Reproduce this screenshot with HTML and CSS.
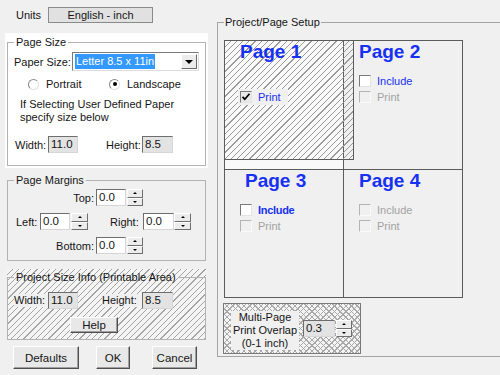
FILE: index.html
```html
<!DOCTYPE html>
<html>
	<head>
		<meta charset="UTF-8">
		<title>Page Setup</title>
		<link rel="stylesheet" href="styles.css">
	</head>
	<body>
		<div class="dialog">
			<div class="side">
				<div class="units"><span>Units</span><div class="unit_btn">English - inch</div></div>
				<div class="paper">
					<fieldset class="grp">
						<legend>Page Size</legend>
						<div class="row row_paper">
							<span class="l_paper">Paper Size:</span>
							<div class="select"><span class="sel_text">Letter 8.5 x 11in</span><span class="drop"></span></div>
						</div>
						<div class="row row_radio">
							<div class="opt opt_first"><span class="radio"></span>Portrait</div>
							<div class="opt"><span class="radio on"></span>Landscape</div>
						</div>
						<p class="note">If Selecting User Defined Paper<br>specify size below</p>
						<div class="row row_wh">
							<span class="l_w">Width:</span><div class="field ro w30">11.0</div>
							<span class="l_h">Height:</span><div class="field ro w31">8.5</div>
						</div>
					</fieldset>
				</div>
				<fieldset class="grp grp_margin">
					<legend>Page Margins</legend>
					<div class="row row_top">
						<span class="l_right">Top:</span><div class="field w30">0.0</div>
						<div class="spin"><span class="up"></span><span class="dn"></span></div>
					</div>
					<div class="row row_lr">
						<span class="l_left">Left:</span><div class="field w30">0.0</div>
						<div class="spin spin_w"><span class="up"></span><span class="dn"></span></div>
						<span class="l_rgt">Right:</span><div class="field w31">0.0</div>
						<div class="spin spin_w spin_tight"><span class="up"></span><span class="dn"></span></div>
					</div>
					<div class="row row_bottom">
						<span class="l_right">Bottom:</span><div class="field w30">0.0</div>
						<div class="spin"><span class="up"></span><span class="dn"></span></div>
					</div>
				</fieldset>
				<div class="proj">
					<fieldset class="grp grp_proj">
						<legend>Project Size Info (Printable Area)</legend>
						<div class="row row_pwh">
							<span class="l_pw">Width:</span><div class="field ro w30">11.0</div>
							<span class="l_ph">Height:</span><div class="field ro w31">8.5</div>
						</div>
						<div class="btn help_btn">Help</div>
					</fieldset>
				</div>
				<div class="actions">
					<div class="btn b_defaults">Defaults</div>
					<div class="btn b_ok">OK</div>
					<div class="btn b_cancel">Cancel</div>
				</div>
			</div>
			<div class="main">
				<fieldset class="grp setup">
					<legend>Project/Page Setup</legend>
					<div class="pages">
						<div class="printable"></div> <!-- printable area over page 1 -->
						<div class="page page_1">
							<div class="page_title">Page 1</div>
							<div class="checks">
								<div class="chk_row hidden"><span class="chk"></span><span class="chk_l">Include</span></div>
								<div class="chk_row pill"><span class="chk grey"><svg width="10" height="10" viewBox="0 0 10 10"><path d="M1.5 4.8l2.3 2.4 4.7-5.4" fill="none" stroke="#000" stroke-width="1.7"/></svg></span><span class="chk_l">Print</span></div>
							</div>
						</div>
						<div class="page">
							<div class="page_title">Page 2</div>
							<div class="checks">
								<div class="chk_row"><span class="chk"></span><span class="chk_l">Include</span></div>
								<div class="chk_row off"><span class="chk"></span><span class="chk_l">Print</span></div>
							</div>
						</div>
						<div class="page">
							<div class="page_title title_3">Page 3</div>
							<div class="checks">
								<div class="chk_row"><span class="chk"></span><span class="chk_l strong">Include</span></div>
								<div class="chk_row off"><span class="chk"></span><span class="chk_l">Print</span></div>
							</div>
						</div>
						<div class="page">
							<div class="page_title">Page 4</div>
							<div class="checks">
								<div class="chk_row off"><span class="chk"></span><span class="chk_l">Include</span></div>
								<div class="chk_row off"><span class="chk"></span><span class="chk_l">Print</span></div>
							</div>
						</div>
					</div>
					<div class="overlap">
						<div class="overlap_l">Multi-Page<br>Print Overlap<br>(0-1 inch)</div>
						<div class="field ro w32">0.3</div>
						<div class="spin"><span class="up"></span><span class="dn"></span></div>
					</div>
				</fieldset>
			</div>
		</div>
	</body>
</html>
```

FILE: styles.css
```css
*{
	margin: 0;
	padding: 0;
	box-sizing: border-box;
}
body{
	background-color: #f0f0f0;
	font-family: "Liberation Sans", Arial, sans-serif;
	font-size: 11px;
	color: #151515;
}
.dialog{
	display: flex;
	width: 500px;
	height: 375px;
	overflow: hidden;
}
.side{
	width: 217px;
	flex: none;
}
.main{
	width: 320px;
	flex: none;
}
.row{
	display: flex;
	align-items: center;
}

/* group boxes */
fieldset.grp{
	border: 1px solid #b2b2b2;
	padding: 0 6px;
	min-width: 0;
}
legend{
	padding: 0 2px;
	line-height: 12px;
}

/* units */
.units{
	display: flex;
	height: 33px;
	padding: 7px 0 0 16px;
}
.units span{
	width: 32px;
	line-height: 16px;
}
.unit_btn{
	width: 105px;
	height: 16px;
	line-height: 14px;
	text-align: center;
	background-color: #e1e1e1;
	border: 1px solid #8a8a8a;
}

/* page size */
.paper{
	margin-left: 5px;
	width: 203px;
	height: 135px;
	padding: 3px 2px 0;
	background-color: #fff;
}
.paper fieldset{
	padding-bottom: 12px;
}
.row_paper{
	margin-top: 4px;
}
.l_paper{
	width: 58px;
}
.select{
	display: flex;
	align-items: center;
	width: 127px;
	height: 19px;
	padding: 1px 1px 1px 2px;
	background-color: #fff;
	border: 1px solid;
	border-color: #7a7a7a #dcdcdc #dcdcdc #7a7a7a;
}
.sel_text{
	background-color: #3399ff;
	color: #fff;
	line-height: 15px;
	padding: 0 1px;
}
.drop{
	display: flex;
	align-items: center;
	justify-content: center;
	margin-left: auto;
	width: 16px;
	height: 15px;
	background-color: #ececec;
	border: 1px solid;
	border-color: #fff #6a6a6a #6a6a6a #fff;
}
.drop::after{
	content: "";
	border-top: 4px solid #000;
	border-left: 4px solid transparent;
	border-right: 4px solid transparent;
}
.row_radio{
	margin-top: 7px;
	height: 12px;
}
.opt{
	display: flex;
	align-items: center;
}
.opt_first{
	margin-left: 14px;
	width: 81px;
}
.radio{
	display: flex;
	align-items: center;
	justify-content: center;
	width: 11px;
	height: 11px;
	margin-right: 7px;
	border-radius: 50%;
	background-color: #fff;
	border: 1px solid;
	border-color: #8a8a8a #e0e0e0 #e0e0e0 #8a8a8a;
}
.radio.on::after{
	content: "";
	width: 4px;
	height: 4px;
	border-radius: 50%;
	background-color: #000;
}
.note{
	margin-top: 8px;
	padding-left: 6px;
	line-height: 13px;
}
.row_wh{
	margin-top: 12px;
}
.l_w{
	margin-left: 1px;
	width: 33px;
}
.l_h{
	margin-left: 28px;
	width: 36px;
}

/* inputs */
.field{
	height: 17px;
	line-height: 15px;
	padding-left: 2px;
	background-color: #fff;
	border: 1px solid;
	border-color: #6e6e6e #d6d6d6 #d6d6d6 #6e6e6e;
	font-size: 11.5px;
}
.field.ro{
	background-color: #e3e3e3;
}
.w30{
	width: 30px;
}
.w31{
	width: 31px;
}
.w32{
	width: 32px;
}
.spin{
	display: flex;
	flex-direction: column;
	width: 16px;
	height: 17px;
	margin-left: 1px;
}
.spin span{
	flex: 1;
	display: flex;
	align-items: center;
	justify-content: center;
	background-color: #ececec;
	border: 1px solid;
	border-color: #fff #6e6e6e #6e6e6e #fff;
}
.spin .up::after{
	content: "";
	border-bottom: 2px solid #000;
	border-left: 2px solid transparent;
	border-right: 2px solid transparent;
}
.spin .dn::after{
	content: "";
	border-top: 2px solid #000;
	border-left: 2px solid transparent;
	border-right: 2px solid transparent;
}
.spin_w{
	width: 17px;
}
.spin_tight{
	margin-left: 0;
}

/* margins */
.grp_margin{
	margin: 6px 0 0 7px;
	width: 199px;
	padding-bottom: 6px !important;
}
.row_top{
	margin-top: 3px;
}
.row_lr,
.row_bottom{
	margin-top: 7px;
}
.l_right{
	width: 80px;
	margin-right: 2px;
	text-align: right;
}
.l_left{
	margin-left: 2px;
	width: 24px;
}
.l_rgt{
	margin-left: 22px;
	width: 33px;
}

/* project size */
.proj{
	margin: 8px 0 0 7px;
	width: 199px;
	padding-top: 2px;
	background: repeating-linear-gradient(135deg, transparent 0 3.6px, #a4a4a4 3.6px 4.4px), #f4f4f4;
}
.grp_proj{
	padding-bottom: 6px !important;
}
.row_pwh{
	margin-top: 9px;
}
.l_pw,
.l_ph{
	background-color: #f0f0f0;
	line-height: 13px;
}
.l_pw{
	width: 34px;
}
.l_ph{
	margin-left: 24px;
	width: 40px;
}
.btn{
	display: flex;
	align-items: center;
	justify-content: center;
	background-color: #e8e8e8;
	border: 1px solid;
	border-color: #fff #4e4e4e #4e4e4e #fff;
	box-shadow: inset -1px -1px #a0a0a0;
	font-size: 11.5px;
}
.help_btn{
	margin: 8px 0 0 56px;
	width: 48px;
	height: 16px;
}

/* bottom buttons */
.actions{
	display: flex;
	margin-top: 6px;
}
.actions .btn{
	height: 23px;
}
.b_defaults{
	margin-left: 13px;
	width: 66px;
}
.b_ok{
	margin-left: 17px;
	width: 34px;
}
.b_cancel{
	margin-left: 22px;
	width: 45px;
}

/* project/page setup */
.setup{
	margin-top: 16px;
	width: 320px;
	padding: 0 0 2px 6px !important;
	border-color: #a4a4a4 !important;
}
.setup legend{
	padding: 0 1px;
}
.pages{
	position: relative;
	display: grid;
	grid-template-columns: 119px 119px;
	grid-template-rows: 129px 128px;
	width: 239px;
	margin-top: 12px;
	border-right: 1px solid #5c5c5c;
	border-bottom: 1px solid #5c5c5c;
}
.page{
	border-left: 1px solid #5c5c5c;
	border-top: 1px solid #5c5c5c;
	padding-left: 15px;
}
.page_1{
	background-color: #f9f9f9;
}
.printable{
	position: absolute;
	left: 0;
	top: 0;
	width: 130px;
	height: 120px;
	border: 1px solid #5c5c5c;
	background: repeating-linear-gradient(135deg, transparent 0 3.6px, #9a9a9a 3.6px 4.4px);
}
.page_title,
.checks{
	position: relative;
	z-index: 1;
}
.page_title{
	font-size: 19px;
	font-weight: bold;
	line-height: 22px;
	color: #1631f2;
}
.title_3{
	margin-left: 5px;
}
.checks{
	margin-top: 10px;
}
.chk_row{
	display: flex;
	align-items: center;
	height: 16px;
	color: #1631f2;
}
.chk_row.hidden{
	visibility: hidden;
}
.chk_row.off{
	color: #a2a2a2;
}
.pill{
	width: 50px;
	margin-left: -2px;
	padding-left: 2px;
	background-color: #f0f0f0;
}
.chk{
	display: flex;
	align-items: center;
	justify-content: center;
	width: 12px;
	height: 12px;
	background-color: #fff;
	border: 1px solid;
	border-color: #7a7a7a #e4e4e4 #e4e4e4 #7a7a7a;
}
.chk.grey{
	background-color: #e8e8e8;
}
.off .chk{
	background-color: #f0f0f0;
	border-color: #b4b4b4 #fafafa #fafafa #b4b4b4;
}
.chk_l{
	margin-left: 6px;
}
.strong{
	font-weight: bold;
	letter-spacing: -0.3px;
}

/* overlap */
.overlap{
	display: flex;
	align-items: center;
	margin: 5px 0 0 -1px;
	width: 138px;
	height: 51px;
	border: 1px solid #7a7a7a;
	background: repeating-linear-gradient(45deg, transparent 0 3px, #a8a8a8 3px 4px), repeating-linear-gradient(135deg, transparent 0 3px, #a8a8a8 3px 4px), #f4f4f4;
}
.overlap_l{
	align-self: flex-start;
	margin: 7px 0 0 7px;
	width: 68px;
	line-height: 13px;
	text-align: center;
	background-color: #f0f0f0;
}
.overlap .field{
	margin-left: 4px;
}
```
